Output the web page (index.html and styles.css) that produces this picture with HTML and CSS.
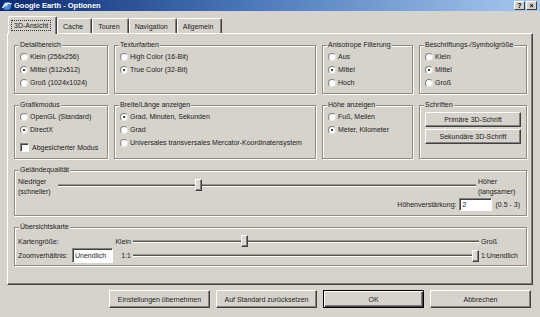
FILE: index.html
```html
<!doctype html>
<html>
<head>
<meta charset="utf-8">
<title>Google Earth - Optionen</title>
<link rel="stylesheet" href="styles.css">
</head>
<body>
<div class="titlebar">
	<svg class="appicon" width="10" height="10" viewBox="0 0 10 10">
		<circle cx="5" cy="5" r="4" fill="#4d86cf"/>
		<circle cx="4" cy="4" r="2" fill="#8fbbe8"/>
		<path d="M0.5 7 C2.5 3.5, 6 1.8, 9.5 2.8" stroke="#fff" stroke-width="1.3" fill="none"/>
	</svg>
	<span class="title">Google Earth - Optionen</span>
	<span class="capbtn first">?</span>
	<span class="capbtn">×</span>
</div>

<div class="tabs">
	<div class="tab active"><span class="focus">3D-Ansicht</span></div>
	<div class="tab">Cache</div>
	<div class="tab">Touren</div>
	<div class="tab">Navigation</div>
	<div class="tab">Allgemein</div>
</div>

<div class="panel">
	<div class="row row1">
		<div class="group">
			<div class="legend">Detailbereich</div>
			<div class="opt"><span class="radio"></span>Klein (256x256)</div>
			<div class="opt"><span class="radio on"></span>Mittel (512x512)</div>
			<div class="opt"><span class="radio"></span>Groß (1024x1024)</div>
		</div>
		<div class="group">
			<div class="legend">Texturfarben</div>
			<div class="opt"><span class="radio"></span>High Color (16-Bit)</div>
			<div class="opt"><span class="radio on"></span>True Color (32-Bit)</div>
		</div>
		<div class="group">
			<div class="legend">Anisotrope Filterung</div>
			<div class="opt"><span class="radio"></span>Aus</div>
			<div class="opt"><span class="radio on"></span>Mittel</div>
			<div class="opt"><span class="radio"></span>Hoch</div>
		</div>
		<div class="group">
			<div class="legend">Beschriftungs-/Symbolgröße</div>
			<div class="opt"><span class="radio"></span>Klein</div>
			<div class="opt"><span class="radio on"></span>Mittel</div>
			<div class="opt"><span class="radio"></span>Groß</div>
		</div>
	</div>

	<div class="row row2">
		<div class="group">
			<div class="legend">Grafikmodus</div>
			<div class="opt"><span class="radio"></span>OpenGL (Standard)</div>
			<div class="opt"><span class="radio on"></span>DirectX</div>
			<div class="opt check"><span class="checkbox"></span>Abgesicherter Modus</div>
		</div>
		<div class="group">
			<div class="legend">Breite/Länge anzeigen</div>
			<div class="opt"><span class="radio on"></span>Grad, Minuten, Sekunden</div>
			<div class="opt"><span class="radio"></span>Grad</div>
			<div class="opt"><span class="radio"></span>Universales transversales Mercator-Koordinatensystem</div>
		</div>
		<div class="group">
			<div class="legend">Höhe anzeigen</div>
			<div class="opt"><span class="radio"></span>Fuß, Meilen</div>
			<div class="opt"><span class="radio on"></span>Meter, Kilometer</div>
		</div>
		<div class="group fonts">
			<div class="legend">Schriften</div>
			<div class="btn fontbtn">Primäre 3D-Schrift</div>
			<div class="btn fontbtn">Sekundäre 3D-Schrift</div>
		</div>
	</div>

	<div class="group wide terrain">
		<div class="legend">Geländequalität</div>
		<div class="terrain-row">
			<div class="side-l">Niedriger<br>(schneller)</div>
			<div class="slider"><span class="thumb" style="left:calc(33.4% - 3px)"></span></div>
			<div class="side-r">Höher<br>(langsamer)</div>
		</div>
		<div class="exag">
			<span>Höhenverstärkung:</span>
			<span class="field small">2</span>
			<span>(0.5 - 3)</span>
		</div>
	</div>

	<div class="group wide overview">
		<div class="legend">Übersichtskarte</div>
		<div class="map-grid">
			<span>Kartengröße:</span>
			<span></span>
			<span class="lo">Klein</span>
			<div class="slider"><span class="thumb" style="left:calc(31.7% - 2px)"></span></div>
			<span class="hi">Groß</span>

			<span>Zoomverhältnis:</span>
			<span class="field">Unendlich</span>
			<span class="lo">1:1</span>
			<div class="slider"><span class="thumb" style="left:calc(100% - 7px)"></span></div>
			<span class="hi">1:Unendlich</span>
		</div>
	</div>
</div>

<div class="buttons">
	<div class="btn">Einstellungen übernehmen</div>
	<div class="btn">Auf Standard zurücksetzen</div>
	<div class="btn default">OK</div>
	<div class="btn">Abbrechen</div>
</div>
</body>
</html>
```

FILE: styles.css
```css
body {
	margin: 0;
	width: 540px;
	height: 317px;
	overflow: hidden;
	background-color: #d6d2cc;
	font-family: "Liberation Sans", Arial, sans-serif;
	font-size: 7px;
	color: #222;
}

/* title bar */
.titlebar {
	height: 11px;
	display: flex;
	align-items: center;
	padding: 0 3px 0 2px;
	background: linear-gradient(to right, #0c2a70, #4a76b8 45%, #a9c9ef);
}
.appicon {
	display: block;
}
.title {
	margin-left: 2px;
	color: #fff;
	font-weight: bold;
	font-size: 7.5px;
}
.capbtn {
	width: 11px;
	height: 9px;
	box-sizing: border-box;
	display: flex;
	align-items: center;
	justify-content: center;
	background-color: #d6d2cc;
	border: 1px solid;
	border-color: #fff #404040 #404040 #fff;
	font-weight: bold;
	font-size: 7px;
	line-height: 1;
	color: #000;
}
.capbtn.first {
	margin-left: auto;
	margin-right: 1px;
}

/* tabs */
.tabs {
	display: flex;
	align-items: flex-end;
	height: 17px;
	margin-top: 5px;
	padding-left: 8px;
}
.tab {
	box-sizing: border-box;
	height: 15px;
	display: flex;
	align-items: center;
	padding: 0 8px 0 5px;
	border-top: 1px solid #fff;
	border-left: 1px solid #fff;
	border-right: 1px solid #404040;
	box-shadow: inset -1px 0 #808080;
	border-radius: 2px 2px 0 0;
}
.tab.active {
	position: relative;
	z-index: 1;
	width: 49px;
	height: 18px;
	margin-bottom: -1px;
	padding: 0 0 1px 2px;
	background-color: #d6d2cc;
}
.focus {
	padding: 1px 2px;
	border: 1px dotted #333;
}

/* main panel */
.panel {
	box-sizing: border-box;
	width: 526px;
	height: 252px;
	margin-left: 7px;
	padding: 11px 5px 0 6px;
	border: 1px solid;
	border-color: #fff #404040 #404040 #fff;
	box-shadow: inset -1px -1px #808080;
}
.row {
	display: grid;
	grid-template-columns: 94px 202px 91px 108px;
	column-gap: 6px;
	margin-bottom: 11px;
}
.row1 .group {
	height: 49px;
}
.row2 .group {
	height: 54px;
}

.group {
	box-sizing: border-box;
	padding: 0 4px 0 5px;
	border: 1px solid #8e8b85;
	box-shadow: inset 1px 1px #fff, 1px 1px #fff;
}
.legend {
	width: fit-content;
	height: 9px;
	line-height: 9px;
	margin: -6px 0 0 -1px;
	padding: 0 1px;
	background-color: #d6d2cc;
	white-space: nowrap;
}
.opt {
	display: flex;
	align-items: center;
	height: 13px;
	white-space: nowrap;
}
.group .legend + .opt {
	margin-top: 1px;
}
.opt.check {
	margin-top: 5px;
}
.radio {
	box-sizing: border-box;
	width: 8px;
	height: 8px;
	margin-right: 2px;
	border-radius: 50%;
	background-color: #fff;
	border: 1px solid;
	border-color: #808080 #e8e6e2 #e8e6e2 #808080;
	display: flex;
	align-items: center;
	justify-content: center;
	flex-shrink: 0;
}
.radio.on:before {
	content: "";
	width: 2px;
	height: 2px;
	border-radius: 50%;
	background-color: #000;
}
.checkbox {
	box-sizing: border-box;
	width: 9px;
	height: 9px;
	margin-right: 3px;
	background-color: #fff;
	border: 1px solid;
	border-color: #808080 #fff #fff #808080;
	box-shadow: inset 1px 1px #404040;
}

/* buttons */
.btn {
	box-sizing: border-box;
	display: flex;
	align-items: center;
	justify-content: center;
	background-color: #d6d2cc;
	border: 1px solid;
	border-color: #fff #404040 #404040 #fff;
	box-shadow: inset -1px -1px #808080;
	white-space: nowrap;
}
.fontbtn {
	width: 96px;
	height: 15px;
}
.fonts .legend + .fontbtn {
	margin-top: 3px;
}
.fontbtn + .fontbtn {
	margin-top: 2px;
}

/* wide groups */
.group.wide {
	padding: 0 4px 0 3px;
	margin-bottom: 11px;
}
.group.wide .legend {
	margin-left: 1px;
}
.terrain {
	height: 46px;
}
.terrain-row {
	display: flex;
	margin-top: 3px;
	line-height: 10px;
}
.side-l {
	width: 40px;
}
.side-r {
	width: 44px;
	margin-left: 2px;
}
.terrain-row .slider {
	flex: 1;
	height: 16px;
}
.exag {
	display: flex;
	justify-content: flex-end;
	align-items: center;
	gap: 3px;
	height: 13px;
	margin-top: 1px;
	padding-right: 2px;
}

.slider {
	position: relative;
	display: flex;
	align-items: center;
}
.slider:before {
	content: "";
	flex: 1;
	height: 1px;
	background-color: #55534f;
	box-shadow: 0 -1px #9a9791, 0 1px #fff;
}
.thumb {
	position: absolute;
	top: 50%;
	width: 7px;
	height: 12px;
	margin-top: -6px;
	box-sizing: border-box;
	background-color: #dcd9d4;
	border: 1px solid;
	border-color: #fff #404040 #404040 #fff;
	box-shadow: inset -1px -1px #808080;
}

.field {
	box-sizing: border-box;
	height: 15px;
	display: flex;
	align-items: center;
	padding-left: 2px;
	background-color: #fff;
	border: 1px solid;
	border-color: #808080 #fff #fff #808080;
	box-shadow: inset 1px 1px #404040;
}
.field.small {
	width: 33px;
	height: 13px;
}

.overview {
	height: 39px;
}
.map-grid {
	display: grid;
	grid-template-columns: 54px 41px 20px 1fr 43px;
	grid-template-rows: 14px 15px;
	align-items: center;
	margin-top: 3px;
	white-space: nowrap;
}
.map-grid .slider {
	height: 100%;
}
.lo {
	text-align: right;
	padding-right: 2px;
}
.hi {
	padding-left: 2px;
}

/* dialog buttons */
.buttons {
	display: flex;
	justify-content: flex-end;
	gap: 6px;
	margin-top: 5px;
	padding-right: 9px;
}
.buttons .btn {
	width: 101px;
	height: 18px;
}
.buttons .btn.default {
	border-color: #000;
	box-shadow: inset 1px 1px #fff, inset -1px -1px #404040, inset -2px -2px #808080;
}
```
